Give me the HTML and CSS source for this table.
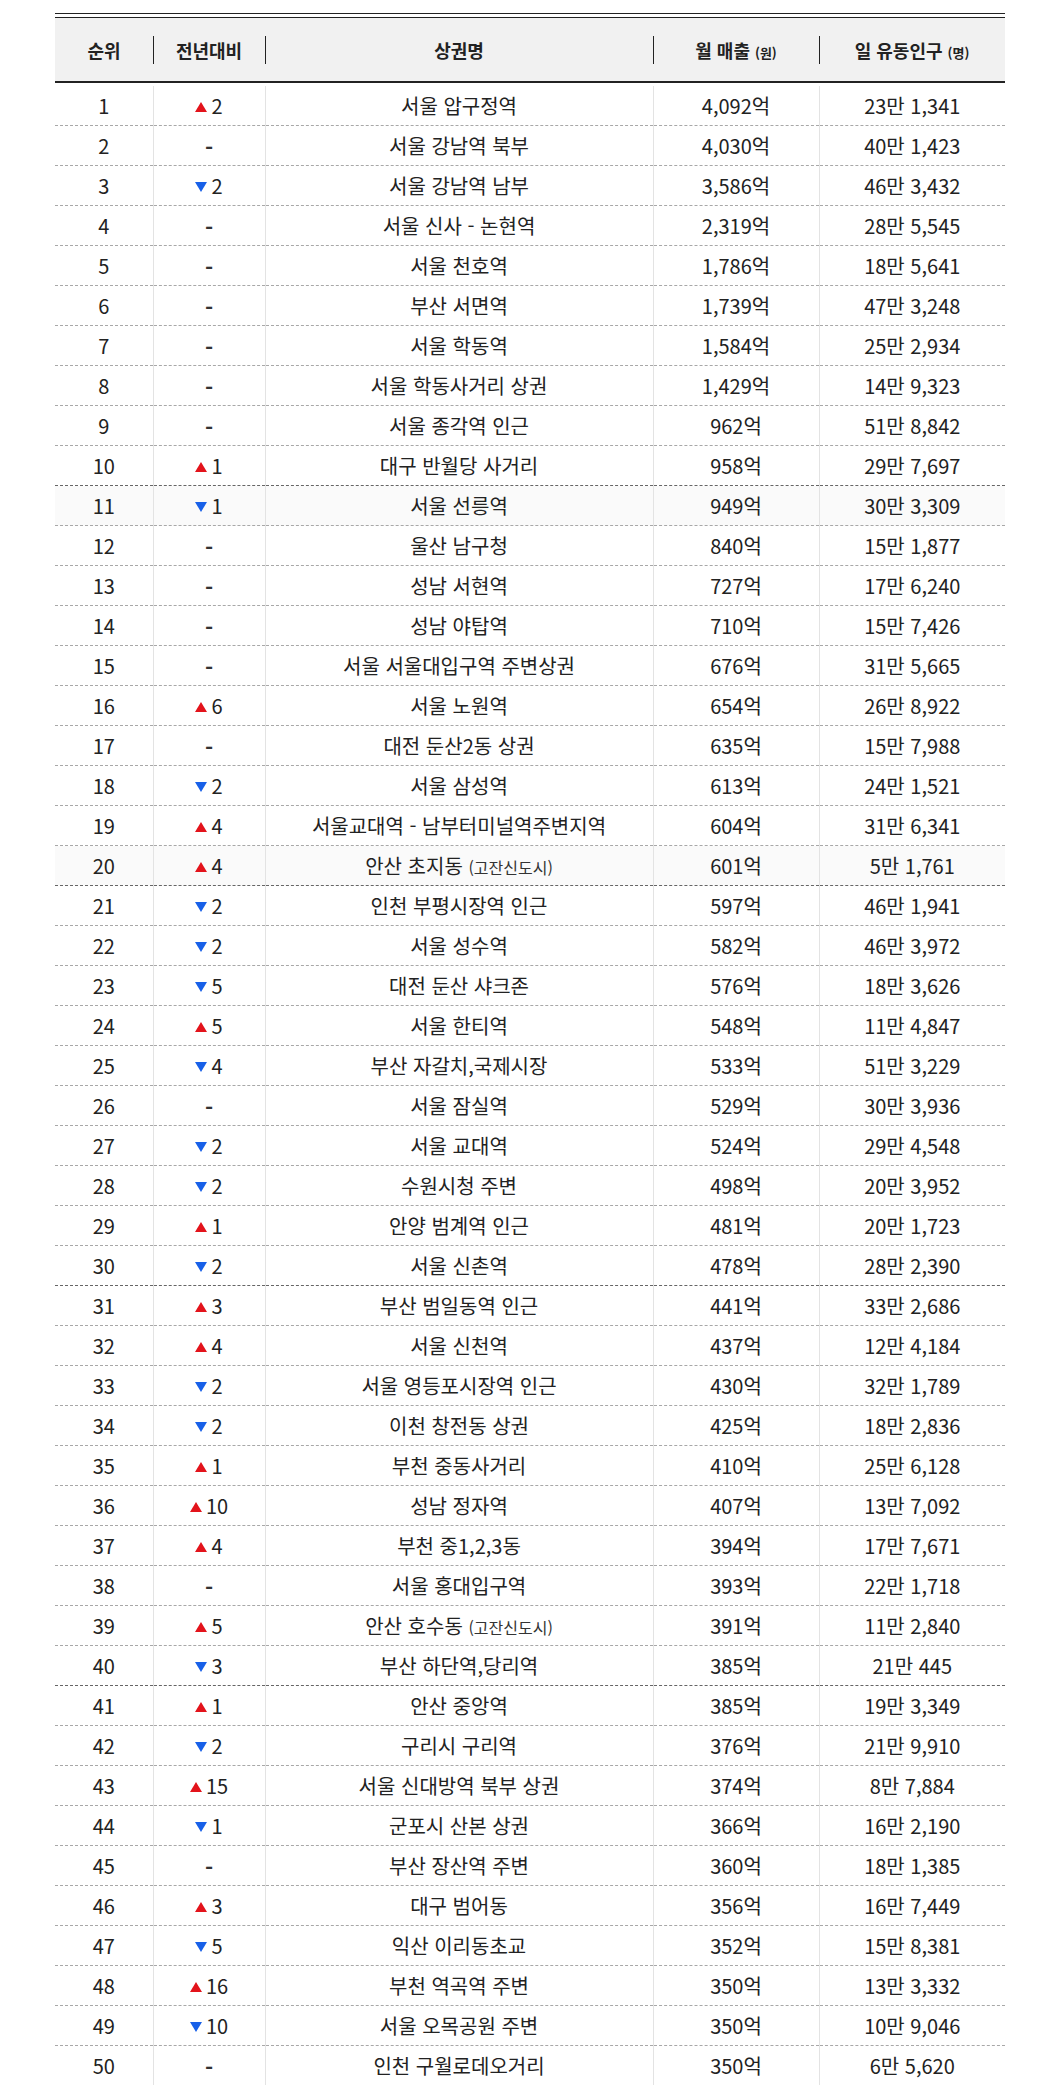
FILE: index.html
```html
<!DOCTYPE html>
<html lang="ko">
<head>
<meta charset="utf-8">
<title>상권 순위</title>
<link rel="stylesheet" href="styles.css">
</head>
<body>
<div class="wrap">
<table class="rank">
<colgroup>
<col class="c1"><col class="c2"><col class="c3"><col class="c4"><col class="c5">
</colgroup>
<thead>
<tr class="head">
<th>순위</th><th>전년대비</th><th>상권명</th><th>월 매출 <small>(원)</small></th><th>일 유동인구 <small>(명)</small></th>
</tr>
<tr class="gap"><td colspan="5"></td></tr>
</thead>
<tbody>
<tr><td>1</td><td><span class="up"></span>2</td><td>서울 압구정역</td><td>4,092억</td><td>23만 1,341</td></tr>
<tr><td>2</td><td class="none">-</td><td>서울 강남역 북부</td><td>4,030억</td><td>40만 1,423</td></tr>
<tr><td>3</td><td><span class="down"></span>2</td><td>서울 강남역 남부</td><td>3,586억</td><td>46만 3,432</td></tr>
<tr><td>4</td><td class="none">-</td><td>서울 신사 - 논현역</td><td>2,319억</td><td>28만 5,545</td></tr>
<tr><td>5</td><td class="none">-</td><td>서울 천호역</td><td>1,786억</td><td>18만 5,641</td></tr>
<tr><td>6</td><td class="none">-</td><td>부산 서면역</td><td>1,739억</td><td>47만 3,248</td></tr>
<tr><td>7</td><td class="none">-</td><td>서울 학동역</td><td>1,584억</td><td>25만 2,934</td></tr>
<tr><td>8</td><td class="none">-</td><td>서울 학동사거리 상권</td><td>1,429억</td><td>14만 9,323</td></tr>
<tr><td>9</td><td class="none">-</td><td>서울 종각역 인근</td><td>962억</td><td>51만 8,842</td></tr>
<tr><td>10</td><td><span class="up"></span>1</td><td>대구 반월당 사거리</td><td>958억</td><td>29만 7,697</td></tr>
<tr class="shade"><td>11</td><td><span class="down"></span>1</td><td>서울 선릉역</td><td>949억</td><td>30만 3,309</td></tr>
<tr><td>12</td><td class="none">-</td><td>울산 남구청</td><td>840억</td><td>15만 1,877</td></tr>
<tr><td>13</td><td class="none">-</td><td>성남 서현역</td><td>727억</td><td>17만 6,240</td></tr>
<tr><td>14</td><td class="none">-</td><td>성남 야탑역</td><td>710억</td><td>15만 7,426</td></tr>
<tr><td>15</td><td class="none">-</td><td>서울 서울대입구역 주변상권</td><td>676억</td><td>31만 5,665</td></tr>
<tr><td>16</td><td><span class="up"></span>6</td><td>서울 노원역</td><td>654억</td><td>26만 8,922</td></tr>
<tr><td>17</td><td class="none">-</td><td>대전 둔산2동 상권</td><td>635억</td><td>15만 7,988</td></tr>
<tr><td>18</td><td><span class="down"></span>2</td><td>서울 삼성역</td><td>613억</td><td>24만 1,521</td></tr>
<tr><td>19</td><td><span class="up"></span>4</td><td>서울교대역 - 남부터미널역주변지역</td><td>604억</td><td>31만 6,341</td></tr>
<tr class="shade"><td>20</td><td><span class="up"></span>4</td><td>안산 초지동 <small>(고잔신도시)</small></td><td>601억</td><td>5만 1,761</td></tr>
<tr><td>21</td><td><span class="down"></span>2</td><td>인천 부평시장역 인근</td><td>597억</td><td>46만 1,941</td></tr>
<tr><td>22</td><td><span class="down"></span>2</td><td>서울 성수역</td><td>582억</td><td>46만 3,972</td></tr>
<tr><td>23</td><td><span class="down"></span>5</td><td>대전 둔산 샤크존</td><td>576억</td><td>18만 3,626</td></tr>
<tr><td>24</td><td><span class="up"></span>5</td><td>서울 한티역</td><td>548억</td><td>11만 4,847</td></tr>
<tr><td>25</td><td><span class="down"></span>4</td><td>부산 자갈치,국제시장</td><td>533억</td><td>51만 3,229</td></tr>
<tr><td>26</td><td class="none">-</td><td>서울 잠실역</td><td>529억</td><td>30만 3,936</td></tr>
<tr><td>27</td><td><span class="down"></span>2</td><td>서울 교대역</td><td>524억</td><td>29만 4,548</td></tr>
<tr><td>28</td><td><span class="down"></span>2</td><td>수원시청 주변</td><td>498억</td><td>20만 3,952</td></tr>
<tr><td>29</td><td><span class="up"></span>1</td><td>안양 범계역 인근</td><td>481억</td><td>20만 1,723</td></tr>
<tr><td>30</td><td><span class="down"></span>2</td><td>서울 신촌역</td><td>478억</td><td>28만 2,390</td></tr>
<tr><td>31</td><td><span class="up"></span>3</td><td>부산 범일동역 인근</td><td>441억</td><td>33만 2,686</td></tr>
<tr><td>32</td><td><span class="up"></span>4</td><td>서울 신천역</td><td>437억</td><td>12만 4,184</td></tr>
<tr><td>33</td><td><span class="down"></span>2</td><td>서울 영등포시장역 인근</td><td>430억</td><td>32만 1,789</td></tr>
<tr><td>34</td><td><span class="down"></span>2</td><td>이천 창전동 상권</td><td>425억</td><td>18만 2,836</td></tr>
<tr><td>35</td><td><span class="up"></span>1</td><td>부천 중동사거리</td><td>410억</td><td>25만 6,128</td></tr>
<tr><td>36</td><td><span class="up"></span>10</td><td>성남 정자역</td><td>407억</td><td>13만 7,092</td></tr>
<tr><td>37</td><td><span class="up"></span>4</td><td>부천 중1,2,3동</td><td>394억</td><td>17만 7,671</td></tr>
<tr><td>38</td><td class="none">-</td><td>서울 홍대입구역</td><td>393억</td><td>22만 1,718</td></tr>
<tr><td>39</td><td><span class="up"></span>5</td><td>안산 호수동 <small>(고잔신도시)</small></td><td>391억</td><td>11만 2,840</td></tr>
<tr><td>40</td><td><span class="down"></span>3</td><td>부산 하단역,당리역</td><td>385억</td><td>21만 445</td></tr>
<tr><td>41</td><td><span class="up"></span>1</td><td>안산 중앙역</td><td>385억</td><td>19만 3,349</td></tr>
<tr><td>42</td><td><span class="down"></span>2</td><td>구리시 구리역</td><td>376억</td><td>21만 9,910</td></tr>
<tr><td>43</td><td><span class="up"></span>15</td><td>서울 신대방역 북부 상권</td><td>374억</td><td>8만 7,884</td></tr>
<tr><td>44</td><td><span class="down"></span>1</td><td>군포시 산본 상권</td><td>366억</td><td>16만 2,190</td></tr>
<tr><td>45</td><td class="none">-</td><td>부산 장산역 주변</td><td>360억</td><td>18만 1,385</td></tr>
<tr><td>46</td><td><span class="up"></span>3</td><td>대구 범어동</td><td>356억</td><td>16만 7,449</td></tr>
<tr><td>47</td><td><span class="down"></span>5</td><td>익산 이리동초교</td><td>352억</td><td>15만 8,381</td></tr>
<tr><td>48</td><td><span class="up"></span>16</td><td>부천 역곡역 주변</td><td>350억</td><td>13만 3,332</td></tr>
<tr><td>49</td><td><span class="down"></span>10</td><td>서울 오목공원 주변</td><td>350억</td><td>10만 9,046</td></tr>
<tr><td>50</td><td class="none">-</td><td>인천 구월로데오거리</td><td>350억</td><td>6만 5,620</td></tr>
</tbody>
</table>
</div>
</body>
</html>
```
FILE: styles.css
```css
html, body {
  margin: 0;
  padding: 0;
  background: #fff;
}
body {
  font-family: "Noto Sans CJK KR", "Noto Sans", sans-serif;
  color: #222;
}
.wrap {
  width: 950px;
  margin: 13px auto 0;
  border-top: 1px solid #222;
  padding-top: 3px;
}
.rank {
  width: 950px;
  border-collapse: collapse;
  table-layout: fixed;
}
.c1 { width: 98px; }
.c2 { width: 112px; }
.c3 { width: 388px; }
.c4 { width: 166px; }
.c5 { width: 186px; }

.head th {
  height: 63px;
  padding: 0;
  background-color: #f1f1f1;
  border-top: 1px solid #222;
  border-bottom: 2px solid #222;
  font-size: 18px;
  font-weight: 700;
  color: #222;
  text-align: center;
  vertical-align: middle;
  line-height: 1;
}
.head th + th {
  background-image: linear-gradient(#222, #222);
  background-size: 1px 28px;
  background-position: left center;
  background-repeat: no-repeat;
}
.head th small {
  font-size: 13px;
}
.gap td {
  height: 3px;
  padding: 0;
  border: 0;
}
tbody td {
  height: 39px;
  padding: 0;
  text-align: center;
  vertical-align: middle;
  font-size: 20px;
  line-height: 1;
  border-bottom: 1px dashed #a8a8a8;
  white-space: nowrap;
}
tbody td + td {
  border-left: 1px solid #e3e3e3;
}
tbody tr:nth-child(10n) td {
  border-bottom-color: #666;
}
tbody tr.shade td {
  background: #fafafa;
}
tbody td.none {
  font-size: 22px;
  font-weight: 700;
  color: #333;
}
tbody td small {
  font-size: 16px;
  color: #333;
}
.up, .down {
  display: inline-block;
  width: 0;
  height: 0;
  margin-right: 4px;
  vertical-align: 2px;
  border-left: 6px solid transparent;
  border-right: 6px solid transparent;
}
.up {
  border-bottom: 10px solid #e3131b;
}
.down {
  border-top: 10px solid #1860e8;
}
```
